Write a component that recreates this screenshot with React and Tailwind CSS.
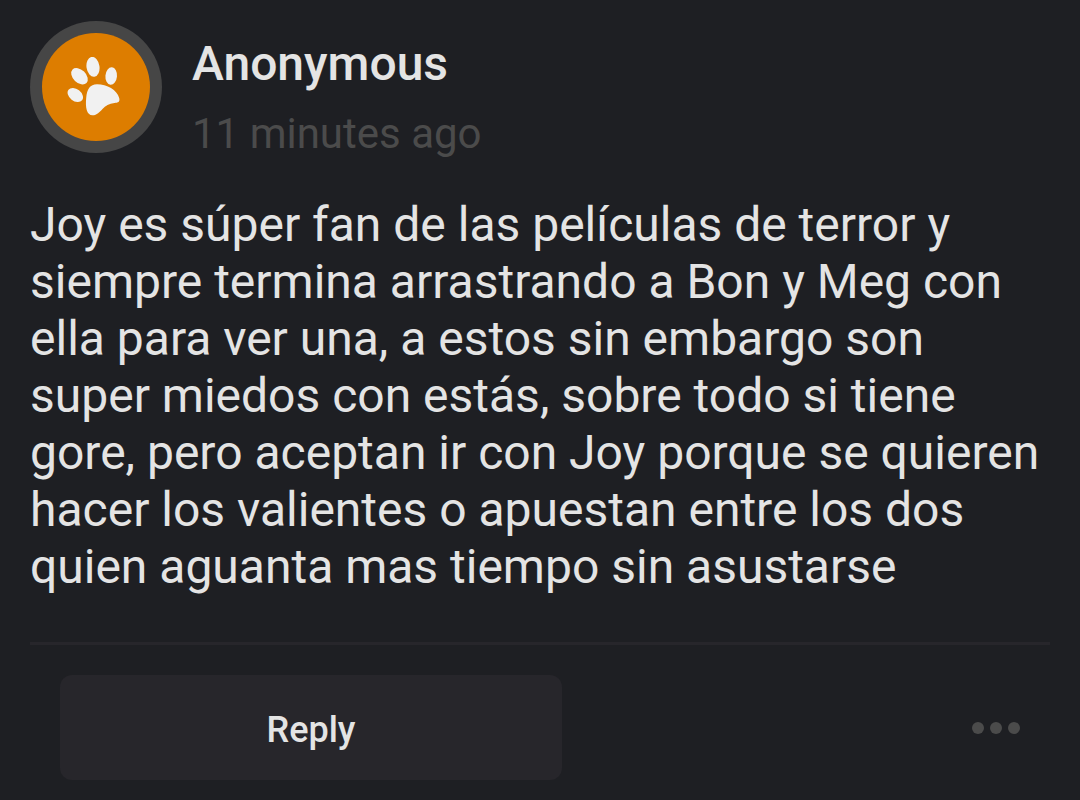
import { useState } from 'react';

const comment = {
  author: 'Anonymous',
  time: '11 minutes ago',
  text: 'Joy es súper fan de las películas de terror y siempre termina arrastrando a Bon y Meg con ella para ver una, a estos sin embargo son super miedos con estás, sobre todo si tiene gore, pero aceptan ir con Joy porque se quieren hacer los valientes o apuestan entre los dos quien aguanta mas tiempo sin asustarse',
};

const PawAvatar = () => (
  <div className="flex size-[132px] shrink-0 items-center justify-center rounded-full bg-[#464646]">
    <div className="flex size-[108px] items-center justify-center rounded-full bg-[#dd7d00]">
      <svg viewBox="0 0 60 60" className="size-[60px] fill-[#f1f1f1]" aria-hidden="true">
        <ellipse cx="27" cy="9.8" rx="6.5" ry="10" transform="rotate(-8 27 9.8)" />
        <ellipse cx="45.2" cy="19" rx="5.8" ry="8.8" transform="rotate(5 45.2 19)" />
        <ellipse cx="13.5" cy="19.2" rx="6.5" ry="9.7" transform="rotate(-46 13.5 19.2)" />
        <ellipse cx="9.3" cy="38" rx="6" ry="8.6" transform="rotate(-52 9.3 38)" />
        <path d="M31 27.3C41 27.3 51 33 53.2 41C54.2 45 52 45.7 48.5 46C43 46.5 39.5 49 36.5 52C33.5 55 31 58.3 26.5 58.3C20.5 58.3 19.3 50 20.2 41C21 32 24 27.3 31 27.3Z" />
      </svg>
    </div>
  </div>
);

const App = () => {
  const [replying, setReplying] = useState(false);

  return (
    <main className="min-h-screen bg-[#1e1f23] px-[30px] pt-[21px] pb-5 font-['Roboto',sans-serif] text-[#e4e4e4]">
      <article>
        <header className="flex gap-[30px]">
          <PawAvatar />
          <div className="pt-[15px]">
            <h1 className="text-[48px] leading-[56px] font-medium">{comment.author}</h1>
            <time className="mt-4 block text-[42px] leading-[52px] text-[#4b4b4b]">{comment.time}</time>
          </div>
        </header>

        <p className="mt-9 text-[48px] leading-[57px]">{comment.text}</p>

        <footer className="mt-[47px] flex items-center justify-between border-t-3 border-[#27262b] px-[30px] pt-[30px]">
          <button
            type="button"
            onClick={() => setReplying(!replying)}
            className="h-[105px] w-[calc(50%+22px)] rounded-xl bg-[#27262b] pt-1 text-[36px] font-medium"
          >
            Reply
          </button>
          <button type="button" aria-label="More options" className="flex gap-[6px]">
            <span className="size-3 rounded-full bg-[#4b4b4b]" />
            <span className="size-3 rounded-full bg-[#4b4b4b]" />
            <span className="size-3 rounded-full bg-[#4b4b4b]" />
          </button>
        </footer>
      </article>
    </main>
  );
};

export default App;
